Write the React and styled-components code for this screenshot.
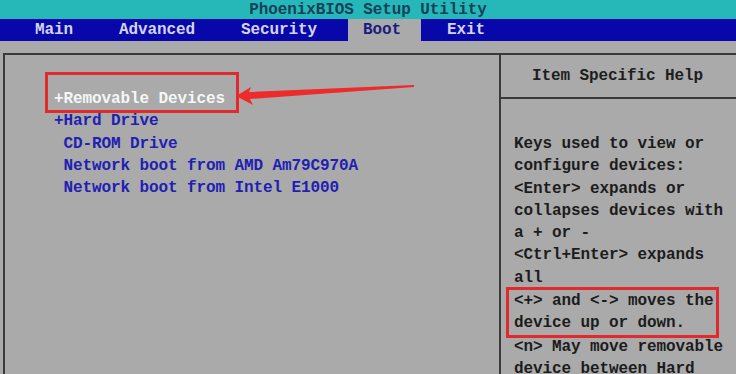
import React from "react";
import styled, { createGlobalStyle } from "styled-components";

const GlobalStyle = createGlobalStyle`
  html, body {
    margin: 0;
    padding: 0;
    background: #aaaaaa;
  }
  * {
    box-sizing: border-box;
  }
`;

const menus = ["Main", "Advanced", "Security", "Boot", "Exit"];

const devices = [
  { label: "Removable Devices", group: true, selected: true },
  { label: "Hard Drive", group: true },
  { label: "CD-ROM Drive" },
  { label: "Network boot from AMD Am79C970A" },
  { label: "Network boot from Intel E1000" },
];

const helpBefore = [
  "Keys used to view or",
  "configure devices:",
  "<Enter> expands or",
  "collapses devices with",
  "a + or -",
  "<Ctrl+Enter> expands",
  "all",
];

const helpMarked = ["<+> and <-> moves the", "device up or down."];

const helpAfter = ["<n> May move removable", "device between Hard"];

const App = () => {
  return (
    <Screen>
      <GlobalStyle />
      <TitleBar>PhoenixBIOS Setup Utility</TitleBar>
      <MenuBar>
        {menus.map((m) => (
          <MenuTab key={m} $active={m === "Boot"}>
            {m}
          </MenuTab>
        ))}
      </MenuBar>
      <Body>
        <Frame>
          <DevicePane>
            {devices.map((d) => (
              <DeviceRow key={d.label} $selected={d.selected}>
                {(d.group ? "+" : " ") + d.label}
              </DeviceRow>
            ))}
          </DevicePane>
          <HelpPane>
            <HelpHeader>Item Specific Help</HelpHeader>
            <HelpText>
              {helpBefore.map((l) => (
                <HelpLine key={l}>{l}</HelpLine>
              ))}
              <Marked>
                {helpMarked.map((l) => (
                  <HelpLine key={l}>{l}</HelpLine>
                ))}
              </Marked>
              {helpAfter.map((l) => (
                <HelpLine key={l}>{l}</HelpLine>
              ))}
            </HelpText>
          </HelpPane>
          <SelectBox />
          <Arrow viewBox="230 80 190 30" width="190" height="30">
            <polygon
              points="236,96 251,87 249,92 414,85 414,87 250,99 253,105"
              fill="#ee2a2a"
            />
          </Arrow>
        </Frame>
      </Body>
    </Screen>
  );
};

export default App;

const Screen = styled.div`
  width: 736px;
  height: 374px;
  overflow: hidden;
  display: flex;
  flex-direction: column;
  background: #aaaaaa;
  font-family: "Liberation Mono", "DejaVu Sans Mono", monospace;
  font-weight: bold;
  font-size: 16px;
  letter-spacing: -0.1px;
`;

const TitleBar = styled.div`
  height: 19px;
  flex-shrink: 0;
  background: #26b8b8;
  color: #17405a;
  text-align: center;
  line-height: 20px;
`;

const MenuBar = styled.div`
  height: 22px;
  flex-shrink: 0;
  display: flex;
  gap: 11px;
  padding-left: 20px;
  background: #0808aa;
`;

const MenuTab = styled.div`
  padding: 0 20px 0 15px;
  line-height: 23px;
  color: ${(p) => (p.$active ? "#1a1a80" : "#d4d4f2")};
  background: ${(p) => (p.$active ? "#aaaaaa" : "transparent")};
`;

const Body = styled.div`
  flex: 1;
  padding: 12px 0 0 3px;
`;

const Frame = styled.div`
  position: relative;
  height: 100%;
  display: grid;
  grid-template-columns: 496px 1fr;
  border-top: 2px solid #3a3a3a;
  border-left: 2px solid #3a3a3a;
`;

const DevicePane = styled.div`
  padding: 33px 0 0 49px;
  border-right: 2px solid #3a3a3a;
`;

const DeviceRow = styled.div`
  white-space: pre;
  line-height: 22.3px;
  color: ${(p) => (p.$selected ? "#f6f6f6" : "#2020b2")};
`;

const HelpPane = styled.div`
  display: flex;
  flex-direction: column;
`;

const HelpHeader = styled.div`
  height: 44px;
  line-height: 43px;
  text-align: center;
  color: #1e1e1e;
  border-bottom: 2px solid #3a3a3a;
  padding-right: 2px;
`;

const HelpText = styled.div`
  padding: 34px 0 0 13px;
  color: #1c1c1c;
`;

const HelpLine = styled.div`
  white-space: pre;
  line-height: 22.3px;
`;

const Marked = styled.div`
  width: 213px;
  margin: -2px 0 -2px -8px;
  padding-left: 5px;
  border: 3px solid #e02a2e;
`;

const SelectBox = styled.div`
  position: absolute;
  left: 40px;
  top: 17px;
  width: 194px;
  height: 41px;
  border: 3px solid #e02a2e;
`;

const Arrow = styled.svg`
  position: absolute;
  left: 225px;
  top: 25px;
`;
